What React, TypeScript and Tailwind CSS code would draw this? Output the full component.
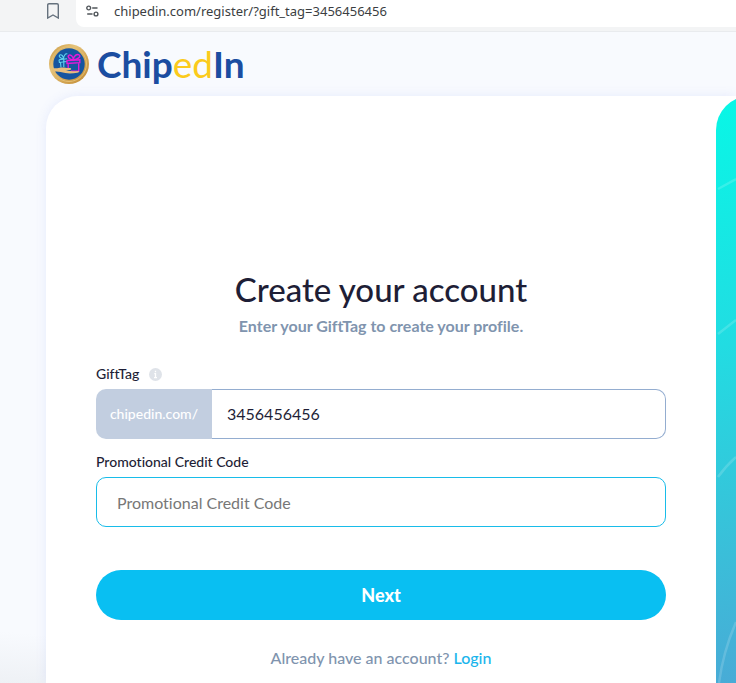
import { useState } from 'react';
import type { FormEvent } from 'react';

function GiftLogo() {
  return (
    <svg viewBox="0 0 40 40" className="size-10 shrink-0" aria-hidden="true">
      <defs>
        <linearGradient id="gold" x1="0" y1="0" x2="1" y2="1">
          <stop offset="0" stopColor="#c8963e" />
          <stop offset="0.35" stopColor="#e6c47c" />
          <stop offset="0.7" stopColor="#d0a04c" />
          <stop offset="1" stopColor="#c08c38" />
        </linearGradient>
      </defs>
      <circle cx="20" cy="20" r="20" fill="url(#gold)" />
      <circle cx="20" cy="20" r="17.500" fill="none" stroke="#e3bf74" strokeWidth="1" />
      <circle cx="20" cy="20" r="15.700" fill="#1555a0" />
      {/* small box behind, tilted to the left */}
      <g fill="none" stroke="#5fd3f0" strokeWidth="1.100">
        <path d="M10 15.700l8-1M10 15.700l.4 2.800 7.600-1M11.500 18.500l.5 5M14.800 15v8" />
        <path d="M14.500 15C11 14.500 9.300 12 10.800 11s3.700 1 3.700 4C14.500 12 16.500 9 18.300 10" />
      </g>
      <g fill="none" stroke="#e619d8" strokeWidth="1.400">
        <path d="M18 16.500l12.800-.8v3l-12.800.8zM19.200 19.500v5M22 27.200h7.700v-8.500" />
        <path d="M24.300 15.900C20 15.700 18.300 12.500 19.800 11.300s4.500 1 4.500 4.600C24.300 12 28 9.300 30.200 11s-1.500 4.400-5.900 4.900" />
      </g>
      <path d="M4.500 24.200c3 .3 5 0 8-.7 3-.2 5 .6 8.500.4 1.600.2 1.500 1.700.1 2l-4.100.6c3 .7 6.500.8 12.500.4 1 .6.400 1.400-1.200 1.800-4 .8-8.300 1-12 .4-4-.8-7-1.800-11-1.400z" fill="#e6be7c" />
    </svg>
  );
}

function BrowserBar() {
  return (
    <div className="flex h-8 items-start border-b border-[#e9ebee] bg-[#f3f4f5]">
      <button type="button" aria-label="Bookmark" className="ml-[46px] mt-[3px] text-[#65717d]">
        <svg viewBox="0 0 14 16" className="h-4 w-3.5" fill="none" stroke="currentColor" strokeWidth="1.400">
          <path d="M1.700 2c0-.8.5-1.300 1.300-1.300h8c.8 0 1.300.5 1.300 1.300v13L7 12l-5.300 3z" />
        </svg>
      </button>
      <div className="ml-4 flex h-[27px] flex-1 items-start rounded-bl-lg bg-white pl-2.5">
        <svg viewBox="0 0 13 12" className="mt-[5px] h-3 w-[13px] shrink-0" fill="none" stroke="#50555a" strokeWidth="1.400" aria-hidden="true">
          <circle cx="2.700" cy="3" r="1.900" />
          <path d="M6.200 3H11.500M1.200 9H6.500" />
          <circle cx="10" cy="9" r="1.900" />
        </svg>
        <input
          aria-label="Address"
          readOnly
          value="chipedin.com/register/?gift_tag=3456456456"
          className="ml-[15px] h-[22px] min-w-0 flex-1 bg-transparent font-['Noto_Sans','Open_Sans',sans-serif] text-[13px] leading-[22px] text-[#3b3e42] outline-none"
        />
      </div>
    </div>
  );
}

function SidePanel() {
  return (
    <aside className="flex w-5 shrink-0 overflow-hidden">
      {/* wider than the visible strip so the corner keeps its full radius */}
      <div className="w-16 shrink-0 rounded-tl-[34px] bg-linear-[170deg,#08f7e6_0%,#22dce2_42%,#36c4da_70%,#49aad6_100%]">
        <svg viewBox="0 0 20 587" className="h-[587px] w-5" fill="none" stroke="#ffffff" strokeOpacity="0.16" strokeWidth="2.500" aria-hidden="true">
          <path d="M2 93L20 83M2 238L20 224M2 381Q9 371 20 361M3 587Q7 556 20 526" />
        </svg>
      </div>
    </aside>
  );
}

export default function App() {
  const [giftTag, setGiftTag] = useState('3456456456');
  const [promo, setPromo] = useState('');

  const handleSubmit = (e: FormEvent) => {
    e.preventDefault();
  };

  return (
    <div className="flex min-h-screen flex-col bg-[#f8fafe] font-['Lato',sans-serif] text-[#1e1e36] [font-variant-ligatures:none]">
      <BrowserBar />

      <header className="flex h-16 items-center pl-[49px]">
        <a href="/" className="flex items-center gap-2 text-[37px] leading-10 text-[#1b4da1]">
          <GiftLogo />
          <span className="font-bold">
            Chip<span className="font-normal text-[#fbcb1c]">ed</span>In
          </span>
        </a>
      </header>

      <div className="flex flex-1 bg-linear-[185deg,#f8fafe_92%,#eef1f5_100%] pl-[46px]">
        <div className="flex min-w-0 flex-1 rounded-tl-[32px] bg-white shadow-[0_0_12px_rgba(100,120,240,0.12)]">
          <main className="min-w-0 flex-1 px-[50px] pt-[171px]">
            <form onSubmit={handleSubmit}>
              <div className="text-center">
                <h1 className="text-[33px] font-medium leading-11">Create your account</h1>
                <p className="mt-[3px] text-base font-bold leading-6 text-[#8094ae]">Enter your GiftTag to create your profile.</p>
              </div>

              <div className="mt-6 flex h-6 items-center gap-2.5">
                <label htmlFor="gift-tag" className="text-sm font-medium">GiftTag</label>
                <svg viewBox="0 0 13 13" className="size-[13px]" aria-hidden="true">
                  <circle cx="6.500" cy="6.500" r="6.500" fill="#dfe3e9" />
                  <path d="M6.500 2.700v1.600M5.300 5.700h1.200v4M5 9.700h3" fill="none" stroke="#fff" strokeWidth="1.300" />
                </svg>
              </div>
              <div className="mt-[3px] flex h-[50px]">
                <span className="flex w-29 shrink-0 items-center justify-center rounded-l-[10px] bg-[#c2cee0] text-sm font-medium text-white">
                  chipedin.com/
                </span>
                <input
                  id="gift-tag"
                  value={giftTag}
                  onChange={(e) => setGiftTag(e.target.value)}
                  className="min-w-0 flex-1 rounded-r-[10px] border border-l-0 border-[#94add0] bg-white px-[15px] text-base outline-none"
                />
              </div>

              <label htmlFor="promo" className="mt-[11px] block text-sm font-medium leading-6">Promotional Credit Code</label>
              <input
                id="promo"
                value={promo}
                onChange={(e) => setPromo(e.target.value)}
                placeholder="Promotional Credit Code"
                className="mt-[3px] block h-[50px] w-full rounded-[10px] border border-[#18bce9] bg-white px-5 text-base outline-none placeholder:text-[#777777]"
              />

              <button type="submit" className="mt-[43px] h-[50px] w-full rounded-full bg-[#09bff2] text-lg font-black text-white">
                Next
              </button>
            </form>

            <p className="mt-[26px] text-center text-base font-medium leading-6 text-[#8094ae]">
              Already have an account? <a href="/login" className="text-[#1bb5ec]">Login</a>
            </p>
          </main>
          <SidePanel />
        </div>
      </div>
    </div>
  );
}
